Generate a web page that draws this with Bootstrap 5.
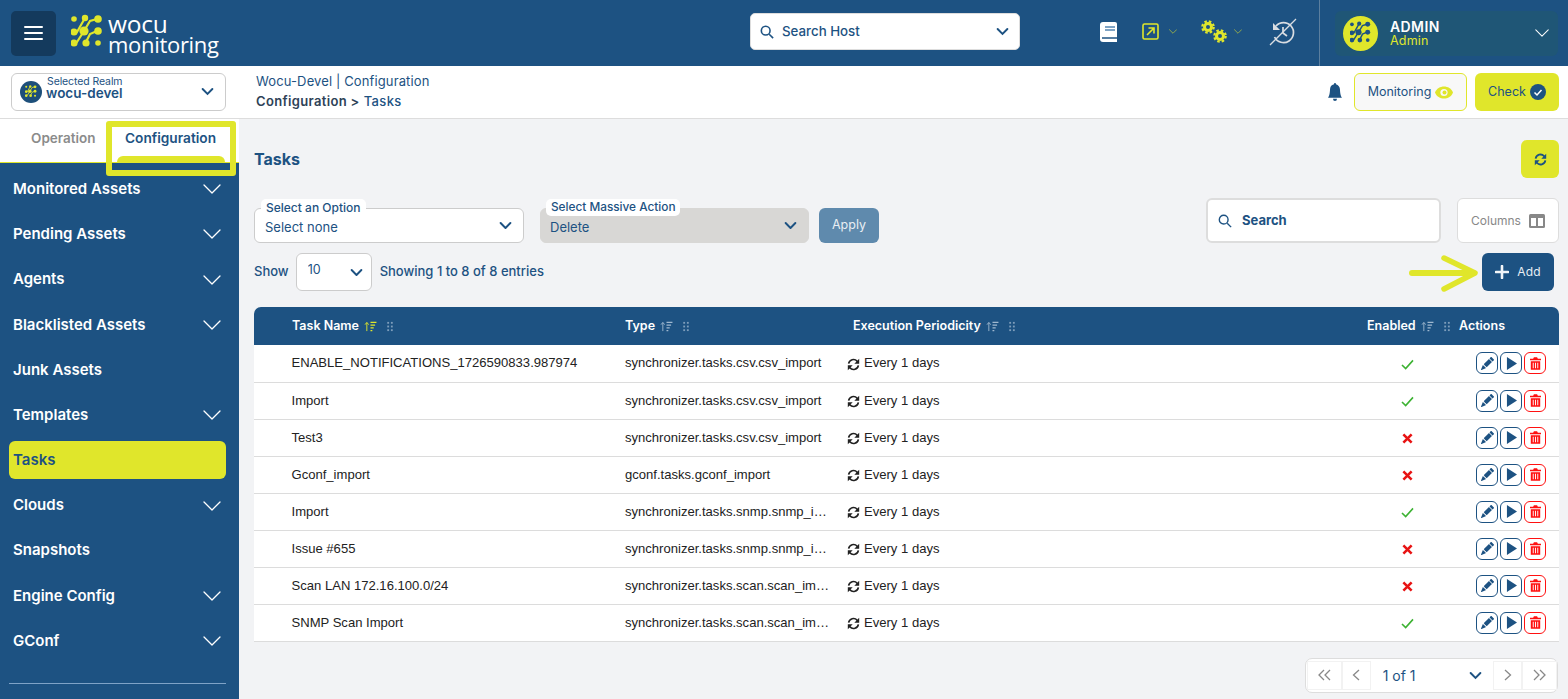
<!DOCTYPE html>
<html lang="en"><head><meta charset="utf-8"><title>Tasks</title>
<link href="https://cdn.jsdelivr.net/npm/bootstrap@5.3.0/dist/css/bootstrap.min.css" rel="stylesheet">
<style>
:root{--navy:#1d5282;--lime:#e0e62b;}
html,body{height:699px;overflow:hidden}
body{font-family:Inter,"Liberation Sans",sans-serif;color:var(--navy);background:#f2f3f5;position:relative;width:1568px}
.topbar{height:66px;background:var(--navy)}
.burger{width:45px;height:45px;margin-left:11px;background:#143a5d;border-radius:5px}
.burger span{display:block;width:19px;height:2px;background:#fff;border-radius:1px}
.logo-txt{color:#fff;font-family:"Open Sans",sans-serif;margin-left:5px;padding-top:3px;width:110px;white-space:nowrap}
.logo-a{display:block;font-size:24.5px;line-height:16px;letter-spacing:-.2px}
.logo-b{display:block;font-size:22px;line-height:20px;letter-spacing:-.3px;padding-top:2px}
.host{width:270px;height:37px;background:#fff;border-radius:5px;border:1px solid #ddd;font-size:13.3px;font-weight:500;padding:0 10px 0 9px;margin:-3px 0 0 532px}
.ticons{margin:-3px 0 0 80px;height:66px}
.vsep{width:1px;height:66px;background:#5b7f9f}
.userbox{width:223px;height:45px;background:#1f5676;border-radius:6px;margin-left:15px;padding:0 9px 0 8px}
.avatar{width:35px;height:35px;border-radius:50%;background:var(--lime)}
.uname{color:#fff;font-size:14px;font-weight:600;line-height:15px;letter-spacing:.4px}
.urole{color:var(--lime);font-size:12.5px;line-height:14px;letter-spacing:.2px}
.subbar{height:53px;background:#fff;border-bottom:1px solid #ddd;padding-bottom:1px}
.subleft{width:239px;flex:none;padding-left:11px}
.realm{width:215px;height:38px;border:1px solid #ccc;border-radius:6px;padding:0 11px 0 8px}
.realm-ic{width:22px;height:22px;border-radius:50%;background:#1d4f7a}
.realm-t{padding-bottom:8px}
.realm-a{font-size:10.5px;line-height:11px;margin-left:5px;letter-spacing:-.1px}
.realm-b{font-size:13.5px;line-height:13px;font-weight:600;margin-left:4px}
.crumb{font-size:13px;line-height:20px;margin:-2px 0 0 17px;letter-spacing:.12px}
.crumb .l2{letter-spacing:.35px}
.crumb b{font-weight:600;color:#2e4257}
.crumb i{font-style:normal;font-weight:500}
.mon-btn{width:113px;height:38px;border:1px solid var(--lime);background:#f8f8f8;border-radius:6px;font-size:12.5px;margin-left:11px;padding-top:1px}
.chk-btn{width:84px;height:38px;background:var(--lime);border-radius:6px;font-size:12.5px;margin:0 9px 0 8px;padding-top:1px}
.layout{height:580px}
.aside{width:239px;flex:none;background:var(--navy);position:relative}
.tabs{height:44px;background:#fff;border-bottom:1px solid var(--lime);font-weight:600}
.tab-a{color:#8b8b8b;width:106px;padding:9px 0 0 31px;font-size:13.5px}
.tab-b{width:133px;padding:9px 0 0 19px;position:relative;font-size:13.7px}
.tab-b::after{content:"";position:absolute;left:11px;right:14px;bottom:-1px;height:7px;background:var(--lime);border-radius:6px 6px 0 0}
.mitem{height:45.2px;color:#fff;font-size:15px;font-weight:600;padding:0 18px 0 13px}
.mlist{padding-top:3.6px}
.mitem.on{background:var(--lime);color:var(--navy);height:38px;margin:3.3px 13px 3.9px 9px;padding-left:4px;border-radius:6px}
.asep{position:absolute;left:9px;width:217px;top:564px;border-top:1px solid #7fa3c7}
.mark-box{position:absolute;left:106px;top:121px;width:130px;height:55px;border:6px solid var(--lime);border-radius:3px}
.main{min-width:0;padding:21px 9px 0 15px}
.h-title{font-size:16px;font-weight:700;margin:2px 0 0}
.refresh{width:38px;height:38px;background:var(--lime);border-radius:6px}
.filters{margin-top:20px;height:45px}
.fgroup{position:relative;width:270px;margin-right:16px}
.fgroup.g2{width:269px;margin-right:10px}
.fgroup label{position:absolute;left:7px;top:-9px;background:#fff;border-radius:5px;font-size:12px;font-weight:500;line-height:15px;padding:1px 5px;z-index:1}
.fgroup.g2 label{left:6px;font-size:11.8px}
.sel{font-family:inherit;color:var(--navy);font-size:13px;height:35px;padding:4px 30px 0 10px;border:1px solid #ccc;border-radius:6px;
background-image:url("data:image/svg+xml,%3csvg xmlns='http://www.w3.org/2000/svg' viewBox='0 0 16 16'%3e%3cpath fill='none' stroke='%231d5282' stroke-linecap='round' stroke-linejoin='round' stroke-width='2.4' d='m2 5 6 6 6-6'/%3e%3c/svg%3e");background-position:right 11px center;background-size:13px 13px}
.sel:disabled{background-color:#d8d7d5;border-color:#d8d7d5;color:var(--navy);padding-left:9px}
.apply{width:60px;height:35px;background:#5f8aad;color:#e8eef3;border:0;border-radius:6px;font-size:12.5px;padding:0}
.sbox{width:235px;height:45px;background:#fff;border:2px solid #ddd;border-radius:6px;font-size:13px;font-weight:700;padding-left:10px;margin-left:auto}
.colbtn{width:102px;height:45px;background:#fff;border:1px solid #ddd;border-radius:6px;font-size:12px;color:#888;margin-left:16px;padding-top:1px}
.showrow{margin-top:10px;height:38px;font-size:13px;font-weight:500}
.sel-s{width:76px;height:38px;padding:0 0 4px 11px;margin:0 8px 0 7px;background-position:right 8px center;font-size:12.5px}
.addbtn{width:72px;height:38px;background:var(--navy);color:#e8eef3;border-radius:6px;font-size:12px;margin-right:5px;letter-spacing:.2px;font-weight:400}
.grid-wrap{margin-top:16px}
.tbl{table-layout:fixed;width:1305px;margin:0;font-family:"Liberation Sans",sans-serif;font-size:13.07px;color:#222;--bs-table-bg:#fff}
.tbl th{background:var(--navy);color:#fff;font-family:Inter,sans-serif;font-size:12.5px;font-weight:600;height:38px;vertical-align:middle;padding:0 8px;border:0;white-space:nowrap}
.tbl th:first-child{border-top-left-radius:7px;padding-left:38px}
.tbl th:last-child{border-top-right-radius:7px}
.tbl td{height:37px;padding:0 8px;vertical-align:middle;border-bottom:1px solid #dcdcdc;white-space:nowrap;overflow:hidden;text-overflow:ellipsis}
.tbl td:first-child{padding-left:37.5px}
.tbl td.stat{padding-left:12px}
.sorti{margin-left:5px;vertical-align:-2px}
.dots{margin-left:10px;vertical-align:-2px}
.acts{gap:2px;justify-content:flex-end;padding-right:5px}
.act{width:22px;height:22px;border:1px solid var(--navy);border-radius:6px;background:#fff}
.act.del{border-color:#f11}
.pager{margin:16px 1px 0 auto;width:253px;height:35px;background:#fff;border:1px solid #ddd;border-radius:7px;color:var(--navy);font-size:14px;font-weight:400}
.pc{width:29px;height:29px;border:1px solid #f2f2f2}
.pc.wide{width:35px}
.pgmid{width:123px;padding:0 11px 0 12px}
.arrow{position:absolute;left:1409px;top:254px}
</style></head><body>
<svg width="0" height="0" class="position-absolute">
<symbol id="nodes" viewBox="0 0 32 38"><g fill="none" stroke="currentColor" stroke-width="2.2" stroke-linecap="round"><path d="M26 5 19 7 13 17 6 28"/><path d="M14 4 6 18"/><path d="M26 17 19 20 15 28"/></g><g fill="currentColor"><circle cx="3" cy="5" r="2.8"/><circle cx="14" cy="4" r="3.2"/><circle cx="27" cy="5" r="3.8"/><circle cx="13" cy="17" r="4.6"/><circle cx="27" cy="17" r="3.8"/><circle cx="3" cy="18" r="3.6"/><circle cx="3" cy="29" r="3.6"/><circle cx="15" cy="29" r="3.6"/><circle cx="27" cy="29" r="2.8"/></g></symbol>
<symbol id="chev" viewBox="0 0 18 10"><path d="M1 1l8 8 8-8" fill="none" stroke="currentColor" stroke-width="1.3" stroke-linecap="round" stroke-linejoin="round"/></symbol>
<symbol id="sync" viewBox="0 0 16 16"><g fill="none" stroke="currentColor" stroke-width="2.2"><path d="M2 7a6 6 0 0 1 10.5-3L14 5.5"/><path d="M14 9a6 6 0 0 1-10.5 3L2 10.5"/></g><path d="M15 1v6H9zM1 15V9h6z" fill="currentColor"/></symbol>
<symbol id="sort" viewBox="0 0 14 12"><path d="M3 11V2M1 4l2-2.5L5 4" fill="none" stroke="currentColor" stroke-width="1"/><path d="M7 1.5h6.5M7 4.5h5M7 7.5h3.5M7 10.5h2" stroke="currentColor" stroke-width="1.2"/></symbol>
<symbol id="drag" viewBox="0 0 6 12"><g fill="currentColor"><rect x="0" y="1" width="2" height="2"/><rect x="4" y="1" width="2" height="2"/><rect x="0" y="5" width="2" height="2"/><rect x="4" y="5" width="2" height="2"/><rect x="0" y="9" width="2" height="2"/><rect x="4" y="9" width="2" height="2"/></g></symbol>
<symbol id="pen" viewBox="0 0 16 16"><path d="M12.854.146a.5.5 0 0 0-.707 0L10.5 1.793 14.207 5.5l1.647-1.646a.5.5 0 0 0 0-.708l-3-3zm.646 6.061L9.793 2.5 3.293 9H3.5a.5.5 0 0 1 .5.5v.5h.5a.5.5 0 0 1 .5.5v.5h.5a.5.5 0 0 1 .5.5v.5h.5a.5.5 0 0 1 .5.5v.207l6.5-6.5zm-7.468 7.468A.5.5 0 0 1 6 13.5V13h-.5a.5.5 0 0 1-.5-.5V12h-.5a.5.5 0 0 1-.5-.5V11h-.5a.5.5 0 0 1-.5-.5V10h-.5a.499.499 0 0 1-.175-.032l-.179.178a.5.5 0 0 0-.11.168l-2 5a.5.5 0 0 0 .65.65l5-2a.5.5 0 0 0 .168-.11l.178-.178z" fill="currentColor"/></symbol>
<symbol id="play" viewBox="0 0 12 14"><path d="M1 0v14l11-7z" fill="currentColor"/></symbol>
<symbol id="trash" viewBox="0 0 14 16"><path d="M5 0h4l1 2h4v2H0V2h4zM1 5h12v11H1zM3.500 7v7h1.200V7zM6.400 7v7h1.200V7zM9.300 7v7h1.200V7z" fill="currentColor" fill-rule="evenodd"/></symbol>
<symbol id="ok" viewBox="0 0 14 12"><path d="M1 6.500 5 10.500 13 1.500" fill="none" stroke="#3cb232" stroke-width="1.7"/></symbol>
<symbol id="no" viewBox="0 0 12 12"><path d="M1.500 1.500 10.500 10.500M10.500 1.500 1.500 10.500" fill="none" stroke="#e81414" stroke-width="2.8"/></symbol>
<symbol id="schd" viewBox="0 0 16 16"><g fill="none" stroke="#222" stroke-width="2"><path d="M2 7a6 6 0 0 1 10.500-3L14 5.500"/><path d="M14 9a6 6 0 0 1-10.500 3L2 10.500"/></g><path d="M15 1v6H9zM1 15V9h6z" fill="#222"/></symbol>
</svg>

<header class="topbar d-flex align-items-center">
 <div class="burger d-flex flex-column justify-content-center align-items-center gap-1"><span></span><span></span><span></span></div>
 <svg width="32" height="38" style="margin-left:15px;color:var(--lime)"><use href="#nodes"/></svg>
 <div class="logo-txt"><span class="logo-a">wocu</span><span class="logo-b">monitoring</span></div>
 <div class="host d-flex align-items-center">
  <svg width="14" height="14" viewBox="0 0 16 16" class="me-2"><circle cx="6.500" cy="6.500" r="5" fill="none" stroke="#1d5282" stroke-width="1.800"/><path d="M10.500 10.500 15 15" stroke="#1d5282" stroke-width="1.800"/></svg>
  <span>Search Host</span>
  <svg class="ms-auto" width="13" height="13" viewBox="0 0 16 16"><path d="m2 5 6 6 6-6" fill="none" stroke="#1d5282" stroke-width="2.400" stroke-linecap="round"/></svg>
 </div>
 <div class="ticons d-flex align-items-center">
  <svg width="18" height="20" viewBox="0 0 18 20"><path d="M3 0h12a2 2 0 0 1 2 2v18H3a3 3 0 0 1-3-3V3a3 3 0 0 1 3-3z" fill="#fff"/><path d="M5 5h10M5 8h10" stroke="#7ea3c4" stroke-width="2"/><path d="M2 16h15" stroke="#1d5282" stroke-width="1.500"/></svg>
  <svg width="17" height="17" viewBox="0 0 17 17" style="margin-left:24px"><rect x="1" y="1" width="15" height="15" rx="1.500" fill="none" stroke="#e0e62b" stroke-width="1.600"/><path d="M5 12 12 5M6.500 5H12V10.500" fill="none" stroke="#e0e62b" stroke-width="1.600"/></svg>
  <svg width="8" height="5" style="margin-left:10px;color:var(--lime)"><use href="#chev"/></svg>
  <svg width="26" height="23" viewBox="0 0 26 23" style="margin-left:24px"><g fill="none" stroke="#e0e62b"><circle cx="7" cy="7" r="3.500" stroke-width="3"/><circle cx="7" cy="7" r="5.700" stroke-width="2.200" stroke-dasharray="2.500 2"/><circle cx="19" cy="16" r="3.500" stroke-width="3"/><circle cx="19" cy="16" r="5.700" stroke-width="2.200" stroke-dasharray="2.500 2"/></g></svg>
  <svg width="8" height="5" style="margin-left:7px;color:var(--lime)"><use href="#chev"/></svg>
  <svg width="28" height="28" viewBox="0 0 28 28" style="margin-left:27px"><g fill="none" stroke="#d9dde2" stroke-width="1.700"><path d="M7 8a10 10 0 1 1-1.500 11"/><path d="M14 9v6l4 3"/><path d="M1 27 27 1" stroke-width="1.300"/></g><path d="M4 5v7h7z" fill="#d9dde2"/></svg>
 </div>
 <div class="vsep" style="margin-left:22px"></div>
 <div class="userbox d-flex align-items-center">
  <div class="avatar d-flex align-items-center justify-content-center" style="color:#1d5282"><svg width="21" height="25"><use href="#nodes"/></svg></div>
  <div style="margin-left:12px"><div class="uname">ADMIN</div><div class="urole">Admin</div></div>
  <svg class="ms-auto" width="14" height="8" style="color:#fff"><use href="#chev"/></svg>
 </div>
</header>

<div class="subbar d-flex align-items-center">
 <div class="subleft">
  <div class="realm d-flex align-items-center">
   <div class="realm-ic d-flex align-items-center justify-content-center" style="color:#e0e62b"><svg width="12" height="14"><use href="#nodes"/></svg></div>
   <div class="realm-t"><div class="realm-a">Selected Realm</div><div class="realm-b">wocu-devel</div></div>
   <svg class="ms-auto" width="13" height="13" viewBox="0 0 16 16"><path d="m2 5 6 6 6-6" fill="none" stroke="#1d5282" stroke-width="2.400" stroke-linecap="round"/></svg>
  </div>
 </div>
 <div class="crumb"><div>Wocu-Devel | Configuration</div><div class="l2"><b>Configuration &gt;</b> <i>Tasks</i></div></div>
 <svg class="ms-auto" width="16" height="18" viewBox="0 0 16 16" preserveAspectRatio="none"><path fill="#1d5282" d="M8 16a2 2 0 0 0 2-2H6a2 2 0 0 0 2 2zm.995-14.901a1 1 0 1 0-1.990 0A5.002 5.002 0 0 0 3 6c0 1.098-.5 6-2 7h14c-1.500-1-2-5.902-2-7 0-2.420-1.720-4.440-4.005-4.901z"/></svg>
 <div class="mon-btn d-flex align-items-center justify-content-center gap-1">Monitoring
  <svg width="18" height="13" viewBox="0 0 18 12"><path d="M0 6c3-8 15-8 18 0-3 8-15 8-18 0z" fill="#e0e62b"/><circle cx="9" cy="6" r="3.600" fill="#f8f8f8"/><circle cx="9.500" cy="6" r="2" fill="#e0e62b"/></svg></div>
 <div class="chk-btn d-flex align-items-center justify-content-center gap-1">Check
  <svg width="16" height="16" viewBox="0 0 16 16"><circle cx="8" cy="8" r="8" fill="#1d5282"/><path d="M4.500 8.500 7 11l4.500-5" fill="none" stroke="#fff" stroke-width="1.500"/></svg></div>
</div>

<div class="layout d-flex">
 <aside class="aside">
  <div class="tabs d-flex"><div class="tab-a">Operation</div><div class="tab-b">Configuration</div></div>
  <nav class="mlist">
   <div class="mitem d-flex align-items-center justify-content-between">Monitored Assets<svg width="18" height="10"><use href="#chev"/></svg></div>
   <div class="mitem d-flex align-items-center justify-content-between">Pending Assets<svg width="18" height="10"><use href="#chev"/></svg></div>
   <div class="mitem d-flex align-items-center justify-content-between">Agents<svg width="18" height="10"><use href="#chev"/></svg></div>
   <div class="mitem d-flex align-items-center justify-content-between">Blacklisted Assets<svg width="18" height="10"><use href="#chev"/></svg></div>
   <div class="mitem d-flex align-items-center">Junk Assets</div>
   <div class="mitem d-flex align-items-center justify-content-between">Templates<svg width="18" height="10"><use href="#chev"/></svg></div>
   <div class="mitem on d-flex align-items-center">Tasks</div>
   <div class="mitem d-flex align-items-center justify-content-between">Clouds<svg width="18" height="10"><use href="#chev"/></svg></div>
   <div class="mitem d-flex align-items-center">Snapshots</div>
   <div class="mitem d-flex align-items-center justify-content-between">Engine Config<svg width="18" height="10"><use href="#chev"/></svg></div>
   <div class="mitem d-flex align-items-center justify-content-between">GConf<svg width="18" height="10"><use href="#chev"/></svg></div>
  </nav>
  <div class="asep"></div>
 </aside>
 <main class="main flex-grow-1">
  <div class="d-flex align-items-center justify-content-between">
   <h1 class="h-title">Tasks</h1>
   <div class="refresh d-flex align-items-center justify-content-center"><svg width="13" height="13"><use href="#sync"/></svg></div>
  </div>
  <div class="filters d-flex align-items-end">
   <div class="fgroup"><label>Select an Option</label><select class="form-select sel"><option>Select none</option></select></div>
   <div class="fgroup g2"><label>Select Massive Action</label><select class="form-select sel" disabled><option>Delete</option></select></div>
   <button class="apply">Apply</button>
   <div class="sbox d-flex align-items-center align-self-stretch"><svg width="14" height="14" viewBox="0 0 16 16" style="margin-right:10px"><circle cx="6.500" cy="6.500" r="5" fill="none" stroke="#1d5282" stroke-width="1.600"/><path d="M10.500 10.500 15 15" stroke="#1d5282" stroke-width="1.600"/></svg><span>Search</span></div>
   <div class="colbtn d-flex align-items-center justify-content-center align-self-stretch gap-2">Columns<svg width="16" height="14" viewBox="0 0 16 14"><rect width="16" height="14" rx="1.500" fill="#888"/><rect x="2" y="4" width="5" height="8" fill="#fff"/><rect x="9" y="4" width="5" height="8" fill="#fff"/></svg></div>
  </div>
  <div class="showrow d-flex align-items-center">Show<select class="form-select sel sel-s"><option>10</option></select>Showing 1 to 8 of 8 entries
   <div class="addbtn ms-auto d-flex align-items-center justify-content-center gap-2"><svg width="14" height="14" viewBox="0 0 14 14"><path d="M7 1v12M1 7h12" stroke="#f2f5f8" stroke-width="2.600" stroke-linecap="round"/></svg>Add</div>
  </div>
  <div class="grid-wrap">
   <table class="table tbl">
    <colgroup><col style="width:363px"><col style="width:222px"><col style="width:520px"><col style="width:92px"><col></colgroup>
    <thead><tr>
     <th>Task Name<svg class="sorti" width="13" height="11" style="color:#e0e62b"><use href="#sort"/></svg><svg class="dots" width="6" height="11" style="color:#7d9dbb"><use href="#drag"/></svg></th>
     <th>Type<svg class="sorti" width="13" height="11" style="color:#9fb8cf"><use href="#sort"/></svg><svg class="dots" width="6" height="11" style="color:#7d9dbb"><use href="#drag"/></svg></th>
     <th style="padding-left:14px">Execution Periodicity<svg class="sorti" width="13" height="11" style="color:#9fb8cf"><use href="#sort"/></svg><svg class="dots" width="6" height="11" style="color:#7d9dbb"><use href="#drag"/></svg></th>
     <th>Enabled<svg class="sorti" width="13" height="11" style="color:#9fb8cf"><use href="#sort"/></svg><svg class="dots" width="6" height="11" style="color:#7d9dbb"><use href="#drag"/></svg></th>
     <th>Actions</th></tr></thead>
    <tbody>
<tr><td>ENABLE_NOTIFICATIONS_1726590833.987974</td><td>synchronizer.tasks.csv.csv_import</td><td><svg class="me-1" width="13" height="13"><use href="#schd"/></svg>Every 1 days</td><td class="text-center stat"><svg width="13" height="11"><use href="#ok"/></svg></td><td><div class="d-flex acts"><div class="act d-flex align-items-center justify-content-center" style="color:#1d5282"><svg width="13" height="13"><use href="#pen"/></svg></div><div class="act d-flex align-items-center justify-content-center" style="color:#1d5282"><svg width="11" height="13"><use href="#play"/></svg></div><div class="act del d-flex align-items-center justify-content-center" style="color:#f11"><svg width="11" height="13"><use href="#trash"/></svg></div></div></td></tr>
<tr><td>Import</td><td>synchronizer.tasks.csv.csv_import</td><td><svg class="me-1" width="13" height="13"><use href="#schd"/></svg>Every 1 days</td><td class="text-center stat"><svg width="13" height="11"><use href="#ok"/></svg></td><td><div class="d-flex acts"><div class="act d-flex align-items-center justify-content-center" style="color:#1d5282"><svg width="13" height="13"><use href="#pen"/></svg></div><div class="act d-flex align-items-center justify-content-center" style="color:#1d5282"><svg width="11" height="13"><use href="#play"/></svg></div><div class="act del d-flex align-items-center justify-content-center" style="color:#f11"><svg width="11" height="13"><use href="#trash"/></svg></div></div></td></tr>
<tr><td>Test3</td><td>synchronizer.tasks.csv.csv_import</td><td><svg class="me-1" width="13" height="13"><use href="#schd"/></svg>Every 1 days</td><td class="text-center stat"><svg width="11" height="11"><use href="#no"/></svg></td><td><div class="d-flex acts"><div class="act d-flex align-items-center justify-content-center" style="color:#1d5282"><svg width="13" height="13"><use href="#pen"/></svg></div><div class="act d-flex align-items-center justify-content-center" style="color:#1d5282"><svg width="11" height="13"><use href="#play"/></svg></div><div class="act del d-flex align-items-center justify-content-center" style="color:#f11"><svg width="11" height="13"><use href="#trash"/></svg></div></div></td></tr>
<tr><td>Gconf_import</td><td>gconf.tasks.gconf_import</td><td><svg class="me-1" width="13" height="13"><use href="#schd"/></svg>Every 1 days</td><td class="text-center stat"><svg width="11" height="11"><use href="#no"/></svg></td><td><div class="d-flex acts"><div class="act d-flex align-items-center justify-content-center" style="color:#1d5282"><svg width="13" height="13"><use href="#pen"/></svg></div><div class="act d-flex align-items-center justify-content-center" style="color:#1d5282"><svg width="11" height="13"><use href="#play"/></svg></div><div class="act del d-flex align-items-center justify-content-center" style="color:#f11"><svg width="11" height="13"><use href="#trash"/></svg></div></div></td></tr>
<tr><td>Import</td><td>synchronizer.tasks.snmp.snmp_import</td><td><svg class="me-1" width="13" height="13"><use href="#schd"/></svg>Every 1 days</td><td class="text-center stat"><svg width="13" height="11"><use href="#ok"/></svg></td><td><div class="d-flex acts"><div class="act d-flex align-items-center justify-content-center" style="color:#1d5282"><svg width="13" height="13"><use href="#pen"/></svg></div><div class="act d-flex align-items-center justify-content-center" style="color:#1d5282"><svg width="11" height="13"><use href="#play"/></svg></div><div class="act del d-flex align-items-center justify-content-center" style="color:#f11"><svg width="11" height="13"><use href="#trash"/></svg></div></div></td></tr>
<tr><td>Issue #655</td><td>synchronizer.tasks.snmp.snmp_import</td><td><svg class="me-1" width="13" height="13"><use href="#schd"/></svg>Every 1 days</td><td class="text-center stat"><svg width="11" height="11"><use href="#no"/></svg></td><td><div class="d-flex acts"><div class="act d-flex align-items-center justify-content-center" style="color:#1d5282"><svg width="13" height="13"><use href="#pen"/></svg></div><div class="act d-flex align-items-center justify-content-center" style="color:#1d5282"><svg width="11" height="13"><use href="#play"/></svg></div><div class="act del d-flex align-items-center justify-content-center" style="color:#f11"><svg width="11" height="13"><use href="#trash"/></svg></div></div></td></tr>
<tr><td>Scan LAN 172.16.100.0/24</td><td>synchronizer.tasks.scan.scan_import</td><td><svg class="me-1" width="13" height="13"><use href="#schd"/></svg>Every 1 days</td><td class="text-center stat"><svg width="11" height="11"><use href="#no"/></svg></td><td><div class="d-flex acts"><div class="act d-flex align-items-center justify-content-center" style="color:#1d5282"><svg width="13" height="13"><use href="#pen"/></svg></div><div class="act d-flex align-items-center justify-content-center" style="color:#1d5282"><svg width="11" height="13"><use href="#play"/></svg></div><div class="act del d-flex align-items-center justify-content-center" style="color:#f11"><svg width="11" height="13"><use href="#trash"/></svg></div></div></td></tr>
<tr><td>SNMP Scan Import</td><td>synchronizer.tasks.scan.scan_import</td><td><svg class="me-1" width="13" height="13"><use href="#schd"/></svg>Every 1 days</td><td class="text-center stat"><svg width="13" height="11"><use href="#ok"/></svg></td><td><div class="d-flex acts"><div class="act d-flex align-items-center justify-content-center" style="color:#1d5282"><svg width="13" height="13"><use href="#pen"/></svg></div><div class="act d-flex align-items-center justify-content-center" style="color:#1d5282"><svg width="11" height="13"><use href="#play"/></svg></div><div class="act del d-flex align-items-center justify-content-center" style="color:#f11"><svg width="11" height="13"><use href="#trash"/></svg></div></div></td></tr>
    </tbody>
   </table>
  </div>
  <div class="pager d-flex align-items-center">
   <div class="pc wide d-flex align-items-center justify-content-center" style="margin-left:1px"><svg width="13" height="12" viewBox="0 0 13 12"><path d="M6 1 1 6l5 5M12 1 7 6l5 5" fill="none" stroke="#888" stroke-width="1.300"/></svg></div>
   <div class="pc d-flex align-items-center justify-content-center"><svg width="8" height="12" viewBox="0 0 8 12"><path d="M7 1 1.500 6 7 11" fill="none" stroke="#888" stroke-width="1.300"/></svg></div>
   <div class="pgmid d-flex align-items-center justify-content-between">1 of 1<svg width="13" height="13" viewBox="0 0 16 16"><path d="m2 5 6 6 6-6" fill="none" stroke="#1d5282" stroke-width="2.400" stroke-linecap="round"/></svg></div>
   <div class="pc d-flex align-items-center justify-content-center"><svg width="8" height="12" viewBox="0 0 8 12"><path d="M1 1l5.500 5L1 11" fill="none" stroke="#888" stroke-width="1.300"/></svg></div>
   <div class="pc wide d-flex align-items-center justify-content-center"><svg width="13" height="12" viewBox="0 0 13 12"><path d="M1 1l5 5-5 5M7 1l5 5-5 5" fill="none" stroke="#888" stroke-width="1.300"/></svg></div>
  </div>
 </main>
</div>
<div class="mark-box"></div>
<svg class="arrow" width="72" height="40" viewBox="0 0 72 40"><path d="M3 19H64" fill="none" stroke="#e0e62b" stroke-width="6" stroke-linecap="round"/><path d="M35 4 66 19 35 35" fill="none" stroke="#e0e62b" stroke-width="5.500" stroke-linecap="round" stroke-linejoin="round"/></svg>
<script src="https://cdn.jsdelivr.net/npm/bootstrap@5.3.0/dist/js/bootstrap.bundle.min.js"></script>
</body></html>
